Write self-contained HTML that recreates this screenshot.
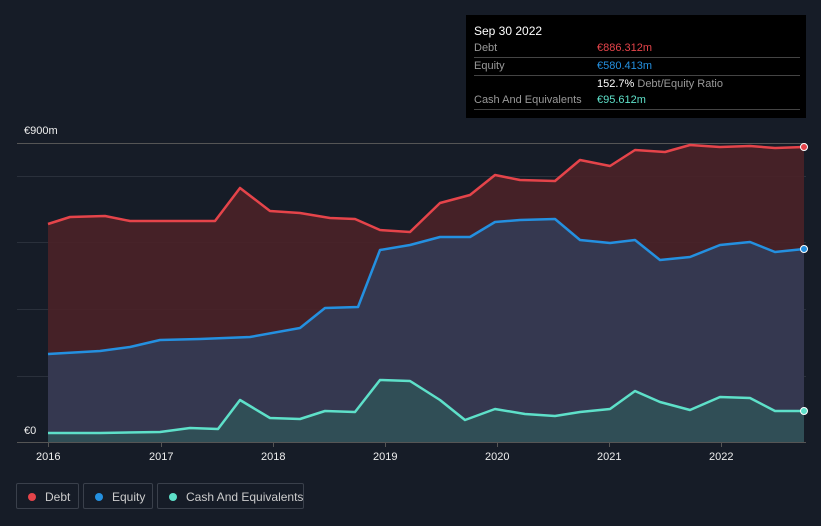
<!DOCTYPE html>
<html><head><meta charset="utf-8"><style>
body{margin:0;width:821px;height:526px;background:#161c27;font-family:"Liberation Sans",sans-serif;overflow:hidden;position:relative}
.tt{position:absolute;left:466px;top:15px;width:340px;height:103px;background:#000;color:#fff;font-size:11px}
.tt .r{position:absolute;left:8px;right:6px;border-bottom:1px solid #444;height:17px;line-height:17px}
.lab{color:#999}
.leg{position:absolute;top:483px;height:26px;border:1px solid #3a404b;border-radius:2px;color:#ccc;font-size:12px;line-height:26px;box-sizing:border-box;white-space:nowrap}
.leg i{position:absolute;left:11px;top:9px;width:8px;height:8px;border-radius:50%}
.ax{position:absolute;color:#eee;font-size:11px}
</style></head><body>
<svg width="821" height="526" style="position:absolute;left:0;top:0">
<g stroke="#2a303b" stroke-width="1">
<line x1="17" y1="143.5" x2="806" y2="143.5" stroke="#555"/>
<line x1="17" y1="176.5" x2="806" y2="176.5"/>
<line x1="17" y1="242.5" x2="806" y2="242.5"/>
<line x1="17" y1="309.5" x2="806" y2="309.5"/>
<line x1="17" y1="376.5" x2="806" y2="376.5"/>
<line x1="17" y1="442.5" x2="806" y2="442.5" stroke="#555"/>
</g>
<polygon fill="#4a2228" fill-opacity="0.9" points="48,224 70,217 105,216 130,221 180,221 215,221 240,188 270,211 300,213 330,218 355,219 380,230 410,232 440,203 470,195 495,175 520,180 555,181 580,160 610,166 635,150 665,152 690,145 720,147 750,146 775,148 804,147 804,442 48,442"/>
<polygon fill="#353a52" fill-opacity="0.95" points="48,354 100,351 130,347 160,340 200,339 250,337 300,328 325,308 358,307 380,250 410,245 440,237 470,237 495,222 520,220 555,219 580,240 610,243 635,240 660,260 690,257 720,245 750,242 775,252 804,249 804,442 48,442"/>
<polygon fill="#2f5458" fill-opacity="0.8" points="48,433 100,433 160,432 190,428 218,429 240,400 270,418 300,419 325,411 355,412 380,380 410,381 440,400 465,420 495,409 525,414 555,416 580,412 610,409 635,391 660,402 690,410 720,397 750,398 775,411 804,411 804,442 48,442"/>
<g fill="none" stroke-width="2.5" stroke-linejoin="round">
<polyline stroke="#e5444a" points="48,224 70,217 105,216 130,221 180,221 215,221 240,188 270,211 300,213 330,218 355,219 380,230 410,232 440,203 470,195 495,175 520,180 555,181 580,160 610,166 635,150 665,152 690,145 720,147 750,146 775,148 804,147"/>
<polyline stroke="#2490e0" points="48,354 100,351 130,347 160,340 200,339 250,337 300,328 325,308 358,307 380,250 410,245 440,237 470,237 495,222 520,220 555,219 580,240 610,243 635,240 660,260 690,257 720,245 750,242 775,252 804,249"/>
<polyline stroke="#5ee0c9" points="48,433 100,433 160,432 190,428 218,429 240,400 270,418 300,419 325,411 355,412 380,380 410,381 440,400 465,420 495,409 525,414 555,416 580,412 610,409 635,391 660,402 690,410 720,397 750,398 775,411 804,411"/>
</g>
<circle cx="804" cy="147" r="3.5" fill="#e5444a" stroke="#fff" stroke-width="1"/>
<circle cx="804" cy="249" r="3.5" fill="#2490e0" stroke="#fff" stroke-width="1"/>
<circle cx="804" cy="411" r="3.5" fill="#5ee0c9" stroke="#fff" stroke-width="1"/>
<g stroke="#555"><line x1="48.5" y1="442" x2="48.5" y2="447"/><line x1="161.5" y1="442" x2="161.5" y2="447"/><line x1="273.5" y1="442" x2="273.5" y2="447"/><line x1="385.5" y1="442" x2="385.5" y2="447"/><line x1="497.5" y1="442" x2="497.5" y2="447"/><line x1="609.5" y1="442" x2="609.5" y2="447"/><line x1="721.5" y1="442" x2="721.5" y2="447"/></g>
</svg>
<div class="ax" style="left:24px;top:125px">€900m</div>
<div class="ax" style="left:24px;top:425px">€0</div>
<div class="ax" style="left:36px;top:451px">2016</div>
<div class="ax" style="left:149px;top:451px">2017</div>
<div class="ax" style="left:261px;top:451px">2018</div>
<div class="ax" style="left:373px;top:451px">2019</div>
<div class="ax" style="left:485px;top:451px">2020</div>
<div class="ax" style="left:597px;top:451px">2021</div>
<div class="ax" style="left:709px;top:451px">2022</div>
<div class="tt">
<div style="position:absolute;left:8px;top:9px;font-size:12px">Sep 30 2022</div>
<div class="r" style="top:25px"><span class="lab">Debt</span><span style="position:absolute;left:123px;color:#e5444a">€886.312m</span></div>
<div class="r" style="top:43px"><span class="lab">Equity</span><span style="position:absolute;left:123px;color:#2490e0">€580.413m</span></div>
<div style="position:absolute;left:131px;top:61px;line-height:17px"><b style="font-weight:normal">152.7%</b> <span class="lab">Debt/Equity Ratio</span></div>
<div class="r" style="top:77px"><span class="lab">Cash And Equivalents</span><span style="position:absolute;left:123px;color:#5ee0c9">€95.612m</span></div>
</div>
<div class="leg" style="left:16px;width:63px"><i style="background:#e5444a"></i><span style="position:absolute;left:28px">Debt</span></div>
<div class="leg" style="left:83px;width:70px"><i style="background:#2490e0"></i><span style="position:absolute;left:28px">Equity</span></div>
<div class="leg" style="left:157px;width:147px"><i style="background:#5ee0c9"></i><span style="position:absolute;left:28px">Cash And Equivalents</span></div>
</body></html>
